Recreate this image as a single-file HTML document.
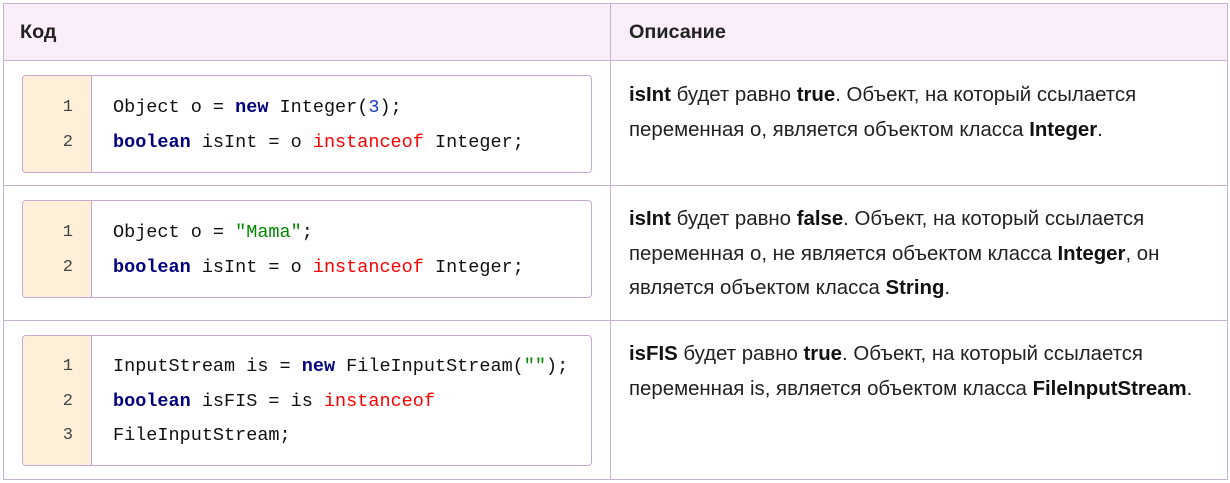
<!DOCTYPE html>
<html><head><meta charset="utf-8"><style>
body{margin:0;background:#fff;width:1230px;height:483px;position:relative;font-family:"Liberation Sans",Arial,sans-serif;color:#222;}
.b{position:absolute;box-sizing:border-box;}
.hd{background:#fbeefb;}
.ln{position:absolute;left:0;width:1230px;height:1px;background:#c7b3cf;}
.vl{position:absolute;top:3px;width:1px;height:477px;background:#c7b3cf;}
.th{position:absolute;top:21px;font-weight:bold;font-size:19.8px;color:#222;}
.box{position:absolute;left:22px;width:568px;border:1px solid #c7a9d2;border-radius:4px;overflow:hidden;}
.gut{position:absolute;left:0;top:0;bottom:0;width:68px;background:#fdefd8;border-right:1px solid #c7a9d2;}
.code{position:absolute;font-family:"Liberation Mono",monospace;font-size:18.5px;line-height:34.5px;white-space:pre;color:#111;}
.num{position:absolute;left:0;width:50px;text-align:right;font-family:"Liberation Mono",monospace;font-size:17px;line-height:34.5px;color:#444;}
.k{color:#00007f;font-weight:bold}.n{color:#00007f;font-weight:bold}.r{color:#f00}.s{color:#080}.d{color:#1a3dbd}
.txt{position:absolute;left:629px;width:590px;font-size:20.4px;line-height:34.5px;color:#222;white-space:nowrap;}
.txt b{color:#111}
</style></head><body>
<div class="b hd" style="left:3px;top:3px;width:1225px;height:57px"></div>
<div class="ln" style="top:3px;left:3px;width:1225px"></div>
<div class="ln" style="top:60px;left:3px;width:1225px"></div>
<div class="ln" style="top:185px;left:3px;width:1225px"></div>
<div class="ln" style="top:320px;left:3px;width:1225px"></div>
<div class="ln" style="top:479px;left:3px;width:1225px"></div>
<div class="vl" style="left:3px"></div>
<div class="vl" style="left:610px"></div>
<div class="vl" style="left:1227px"></div>
<div class="th" style="left:20px">Код</div>
<div class="th" style="left:629px">Описание</div>

<div class="box" style="top:75px;height:96px"><div class="gut"></div>
<div class="num" style="top:15px">1<br>2</div>
<div class="code" style="left:90px;top:15px">Object o = <span class="n">new</span> Integer(<span class="d">3</span>);
<span class="k">boolean</span> isInt = o <span class="r">instanceof</span> Integer;</div></div>

<div class="box" style="top:200px;height:96px"><div class="gut"></div>
<div class="num" style="top:15px">1<br>2</div>
<div class="code" style="left:90px;top:15px">Object o = <span class="s">"Mama"</span>;
<span class="k">boolean</span> isInt = o <span class="r">instanceof</span> Integer;</div></div>

<div class="box" style="top:335px;height:129px"><div class="gut"></div>
<div class="num" style="top:14px">1<br>2<br>3</div>
<div class="code" style="left:90px;top:14px">InputStream is = <span class="n">new</span> FileInputStream(<span class="s">""</span>);
<span class="k">boolean</span> isFIS = is <span class="r">instanceof</span>
FileInputStream;</div></div>

<div class="txt" style="top:78px"><b>isInt</b> будет равно <b>true</b>. Объект, на который ссылается<br>переменная o, является объектом класса <b>Integer</b>.</div>
<div class="txt" style="top:202px"><b>isInt</b> будет равно <b>false</b>. Объект, на который ссылается<br>переменная o, не является объектом класса <b>Integer</b>, он<br>является объектом класса <b>String</b>.</div>
<div class="txt" style="top:337px"><b>isFIS</b> будет равно <b>true</b>. Объект, на который ссылается<br>переменная is, является объектом класса <b>FileInputStream</b>.</div>
</body></html>
